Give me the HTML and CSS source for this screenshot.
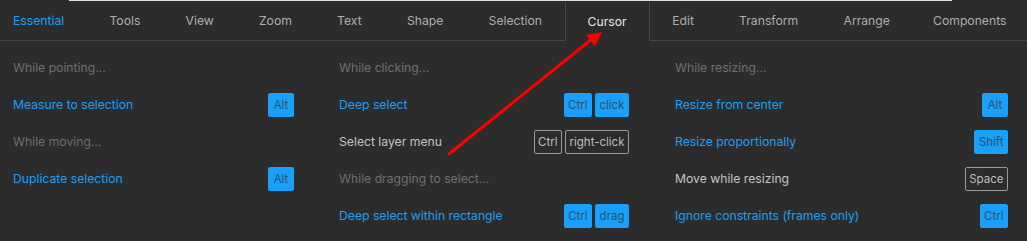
FILE: index.html
```html
<!DOCTYPE html>
<html lang="en">
<head>
    <meta charset="UTF-8">
    <meta name="viewport" content="width=device-width, initial-scale=1.0">
    <title>Keyboard shortcuts - Cursor</title>
    <link rel="stylesheet" href="styles.css">
</head>
<body>
    <div class="top-strip"></div>
    <nav class="tabs">
        <span class="tab tab-first current">Essential</span>
        <span class="tab">Tools</span>
        <span class="tab">View</span>
        <span class="tab">Zoom</span>
        <span class="tab">Text</span>
        <span class="tab">Shape</span>
        <span class="tab">Selection</span>
        <span class="tab active">Cursor</span>
        <span class="tab">Edit</span>
        <span class="tab">Transform</span>
        <span class="tab">Arrange</span>
        <span class="tab tab-fill">Components</span>
    </nav>

    <div class="panel">
        <div class="col col1">
            <div class="row head">While pointing...</div>
            <div class="row on"><span>Measure to selection</span><span class="keys"><kbd class="key fill">Alt</kbd></span></div>
            <div class="row head">While moving...</div>
            <div class="row on"><span>Duplicate selection</span><span class="keys"><kbd class="key fill">Alt</kbd></span></div>
        </div>
        <div class="col col2">
            <div class="row head">While clicking...</div>
            <div class="row on"><span>Deep select</span><span class="keys"><kbd class="key fill">Ctrl</kbd><kbd class="key fill">click</kbd></span></div>
            <div class="row"><span>Select layer menu</span><span class="keys"><kbd class="key">Ctrl</kbd><kbd class="key">right-click</kbd></span></div>
            <div class="row head">While dragging to select...</div>
            <div class="row on"><span>Deep select within rectangle</span><span class="keys"><kbd class="key fill">Ctrl</kbd><kbd class="key fill">drag</kbd></span></div>
        </div>
        <div class="col col3">
            <div class="row head">While resizing...</div>
            <div class="row on"><span>Resize from center</span><span class="keys"><kbd class="key fill">Alt</kbd></span></div>
            <div class="row on"><span>Resize proportionally</span><span class="keys"><kbd class="key fill">Shift</kbd></span></div>
            <div class="row"><span>Move while resizing</span><span class="keys"><kbd class="key">Space</kbd></span></div>
            <div class="row on"><span>Ignore constraints (frames only)</span><span class="keys"><kbd class="key fill">Ctrl</kbd></span></div>
        </div>
    </div>

    <!-- annotation arrow drawn over the panel -->
    <svg class="arrow" width="1027" height="241" viewBox="0 0 1027 241">
        <line x1="449" y1="154" x2="592" y2="39" stroke="#ff0000" stroke-width="3" stroke-linecap="round"/>
        <polygon points="602,32 586,35 595,46" fill="#ff0000"/>
    </svg>
</body>
</html>
```

FILE: styles.css
```css
body {
    margin: 0;
    background: #2c2c2c;
    font-family: Inter, "Noto Sans", sans-serif;
    font-size: 12.2px;
    color: #c4c4c4;
    width: 1027px;
    height: 241px;
    overflow: hidden;
    position: relative;
}

.top-strip {
    height: 1px;
    margin: 0 75px 0 69px;
    background: #dedede;
}

.tabs {
    display: flex;
    height: 39px;
    border-bottom: 1px solid #474747;
    font-size: 12.2px;
}

.tab {
    display: flex;
    align-items: center;
    padding: 0 22.6px;
    color: #adadad;
    white-space: nowrap;
}

.tab-first {
    padding-left: 13px;
}

.tab.current {
    color: #18a0fb;
}

.tab.active {
    color: #e6e6e6;
    margin-top: 1px;
    border-left: 1px solid #474747;
    border-right: 1px solid #474747;
    border-bottom: 1px solid #2c2c2c;
    margin-bottom: -1px;
    padding: 0 22px;
}

.tab-fill {
    flex: 1;
    justify-content: center;
    padding: 0;
}

.panel {
    display: grid;
    grid-template-columns: 281px 290px 334px;
    column-gap: 45px;
    padding: 8px 0 0 13px;
}

.col3 {
    margin-left: 1px;
}

.row {
    display: flex;
    align-items: center;
    justify-content: space-between;
    height: 37px;
}

.row.head {
    color: #6f6f6f;
}

.row.on {
    color: #18a0fb;
}

.keys {
    display: flex;
    gap: 3px;
}

.key {
    font-family: Inter, "Noto Sans", sans-serif;
    font-size: 11.5px;
    height: 22px;
    line-height: 22px;
    padding: 0 3.5px;
    min-width: 17px;
    text-align: center;
    border: 1px solid #9a9a9a;
    border-radius: 2px;
    color: #bdbdbd;
}

.key.fill {
    background: #18a0fb;
    border-color: #18a0fb;
    color: #2f4f66;
}

.arrow {
    position: absolute;
    top: 0;
    left: 0;
    pointer-events: none;
}
```
